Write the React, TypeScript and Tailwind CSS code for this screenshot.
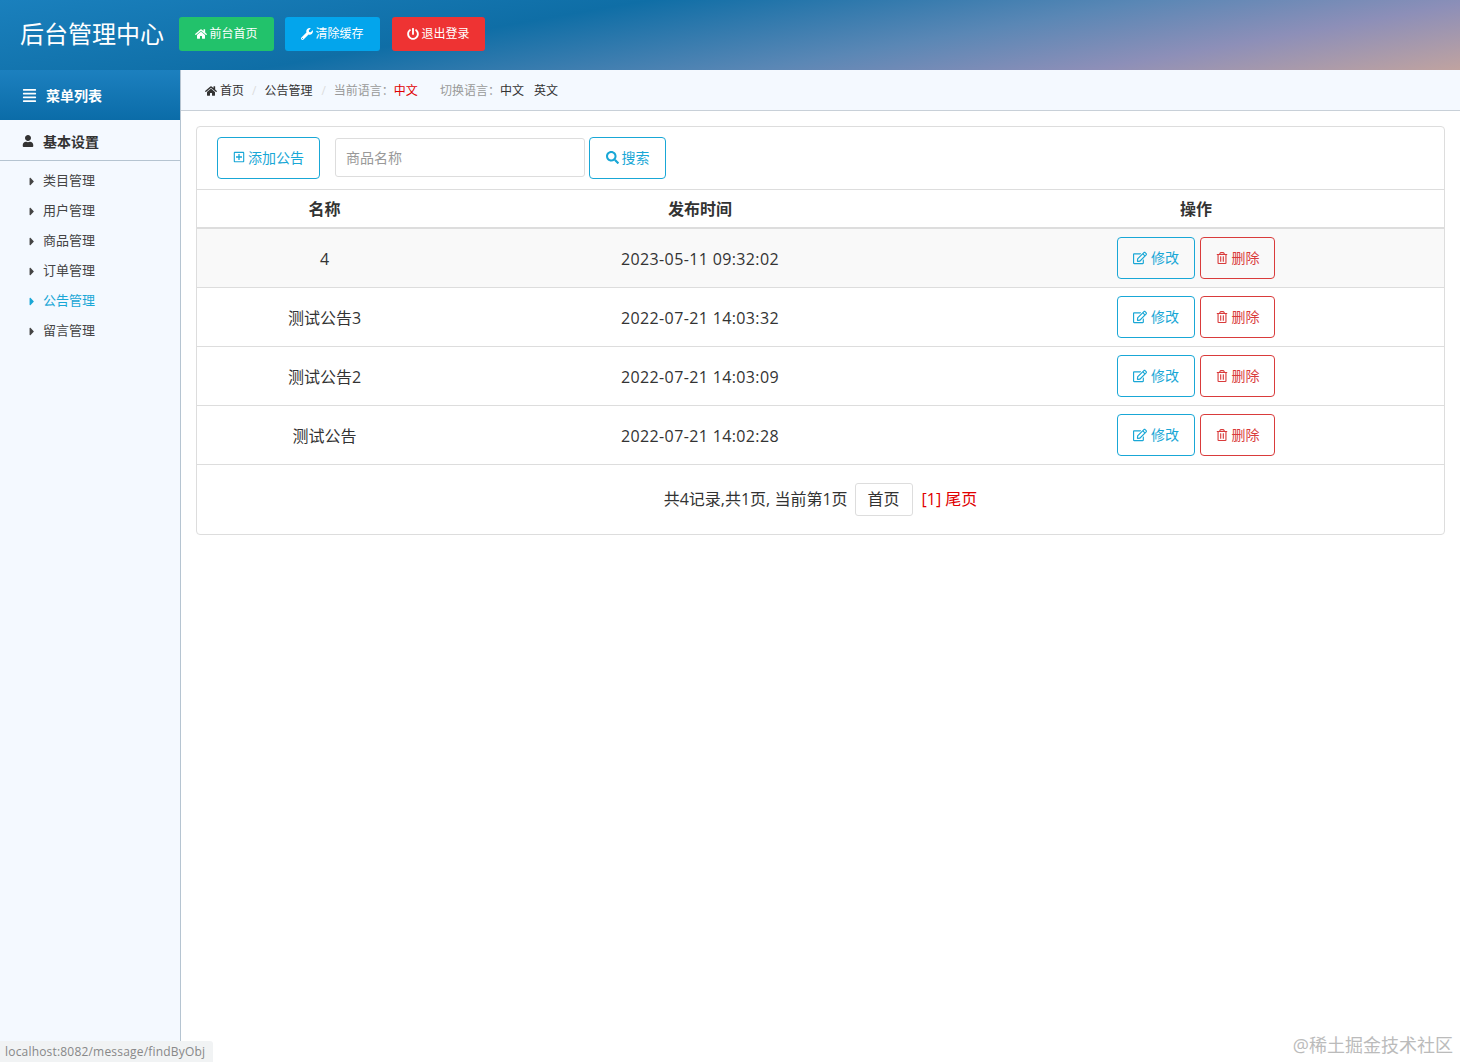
import { FaHome, FaWrench, FaPowerOff, FaAlignJustify, FaUser, FaCaretRight, FaRegPlusSquare, FaSearch, FaRegEdit, FaRegTrashAlt } from "react-icons/fa";

const menus = ["类目管理", "用户管理", "商品管理", "订单管理", "公告管理", "留言管理"];

const rows = [
  { name: "4", time: "2023-05-11 09:32:02" },
  { name: "测试公告3", time: "2022-07-21 14:03:32" },
  { name: "测试公告2", time: "2022-07-21 14:03:09" },
  { name: "测试公告", time: "2022-07-21 14:02:28" },
];

const font = "font-['Open_Sans','Noto_Sans_CJK_SC',sans-serif]";

export default function App() {
  return (
    <div className={`relative flex h-[1062px] flex-col overflow-hidden bg-white text-[#333] ${font}`}>
      <header className="flex h-[70px] shrink-0 items-center pb-[2px] bg-[linear-gradient(170deg,#1a80bd_0%,#0f6ea6_35%,#5a87b5_62%,#8d8fb8_80%,#c0a3a0_100%)]">
        <h1 className="ml-[20px] w-[159px] whitespace-nowrap pb-[1px] text-[24px] font-normal text-white">后台管理中心</h1>
        <a className="flex h-[34px] w-[95px] items-center justify-center gap-[2px] rounded-[3px] bg-[#22c26b] text-[12px] text-white">
          <FaHome className="text-[12px]" />前台首页
        </a>
        <a className="ml-[11px] flex h-[34px] w-[95px] items-center justify-center gap-[2px] rounded-[3px] bg-[#03a5ec] text-[12px] text-white">
          <FaWrench className="text-[12px]" />清除缓存
        </a>
        <a className="ml-[12px] flex h-[34px] w-[93px] items-center justify-center gap-[2px] rounded-[3px] bg-[#ee3333] text-[12px] text-white">
          <FaPowerOff className="text-[12px]" />退出登录
        </a>
      </header>

      <div className="flex min-h-0 flex-1">
        <aside className="w-[181px] shrink-0 border-r border-[#b5c4d1] bg-[#f4f9ff]">
          <div className="flex h-[50px] items-center bg-[linear-gradient(180deg,#1c80bf,#0b6ca8)] pl-[22px] text-[14px] font-bold text-white">
            <FaAlignJustify className="mr-[9px] text-[15px]" />菜单列表
          </div>
          <div className="flex h-[41px] items-center border-b border-[#b5c4d1] pl-[22px] pt-[2px] text-[14px] font-bold text-[#333]">
            <FaUser className="mr-[9px] text-[12px]" />基本设置
          </div>
          <ul className="pt-[5px]">
            {menus.map((m) => (
              <li
                key={m}
                className={`flex h-[30px] items-center pl-[29px] text-[13px] ${m === "公告管理" ? "text-[#19a7d6]" : "text-[#444]"}`}
              >
                <FaCaretRight className="mr-[8px] w-[6px] text-[13px]" />
                {m}
              </li>
            ))}
          </ul>
        </aside>

        <main className="min-w-0 flex-1">
          <div className="flex h-[41px] items-center border-b border-[#c8d0d8] bg-[#f4f9ff] pl-[24px] pt-[2px] text-[12px] text-[#333]">
            <FaHome className="mr-[3px] text-[12px]" />首页
            <span className="mx-[8px] text-[#ddd]">/</span>公告管理
            <span className="ml-[9px] mr-[8px] text-[#ddd]">/</span>
            <span className="text-[#999]">当前语言：</span>
            <span className="text-[#e00000]">中文</span>
            <span className="ml-[22px] text-[#999]">切换语言：</span>
            <span>中文</span>
            <span className="ml-[10px]">英文</span>
          </div>

          <section className="mx-[15px] mt-[15px] rounded-[4px] border border-[#ddd]">
            <div className="flex h-[63px] items-center border-b border-[#ddd] pl-[20px]">
              <button className="flex h-[42px] w-[103px] items-center justify-center gap-[3px] rounded-[4px] border border-[#19a7d6] pb-[2px] text-[14px] text-[#19a7d6]">
                <FaRegPlusSquare className="text-[12px]" />添加公告
              </button>
              <input
                placeholder="商品名称"
                className="mb-[1px] ml-[15px] h-[39px] w-[250px] rounded-[3px] border border-[#ddd] px-[10px] text-[14px] outline-none placeholder:text-[#999]"
              />
              <button className="ml-[4px] flex h-[42px] w-[77px] items-center justify-center gap-[3px] rounded-[4px] border border-[#19a7d6] pb-[2px] text-[14px] text-[#19a7d6]">
                <FaSearch className="text-[13px]" />搜索
              </button>
            </div>

            <table className="w-full table-fixed border-collapse text-center text-[16px]">
              <thead>
                <tr className="h-[38px] border-b-2 border-[#ddd]">
                  <th className="w-[255px] font-bold">名称</th>
                  <th className="w-[496px] font-bold">发布时间</th>
                  <th className="font-bold">操作</th>
                </tr>
              </thead>
              <tbody>
                {rows.map((r, i) => (
                  <tr key={r.time} className={`h-[59px] border-b border-[#ddd] ${i === 0 ? "bg-[#f9f9f9]" : ""}`}>
                    <td className="pt-[2px]">{r.name}</td>
                    <td className="pt-[2px] tracking-[0.37px]">{r.time}</td>
                    <td>
                      <div className="flex justify-center gap-[5px]">
                        <button className="flex h-[42px] w-[78px] items-center justify-center gap-[4px] rounded-[4px] border border-[#19a7d6] text-[14px] text-[#19a7d6]">
                          <FaRegEdit className="text-[14px]" />修改
                        </button>
                        <button className="flex h-[42px] w-[75px] items-center justify-center gap-[4px] rounded-[4px] border border-[#d93b3b] text-[14px] text-[#d93b3b]">
                          <FaRegTrashAlt className="text-[12px]" />删除
                        </button>
                      </div>
                    </td>
                  </tr>
                ))}
              </tbody>
            </table>

            <div className="flex h-[69px] items-center justify-center text-[16px]">
              共4记录,共1页, 当前第1页
              <span className="ml-[7px] flex h-[33px] w-[58px] items-center justify-center rounded-[3px] border border-[#ddd]">首页</span>
              <span className="ml-[9px] text-[#e00000]">[1] 尾页</span>
            </div>
          </section>
        </main>
      </div>

      <div className="absolute bottom-0 left-0 flex h-[21px] w-[213px] items-center rounded-tr-[3px] bg-[#f1f3f4] pl-[5px] text-[12px] tracking-[0.19px] text-[#888]">
        localhost:8082/message/findByObj
      </div>
      <div className="absolute bottom-[3px] right-[7px] text-[18px] text-[#bbb]">@稀土掘金技术社区</div>
    </div>
  );
}
